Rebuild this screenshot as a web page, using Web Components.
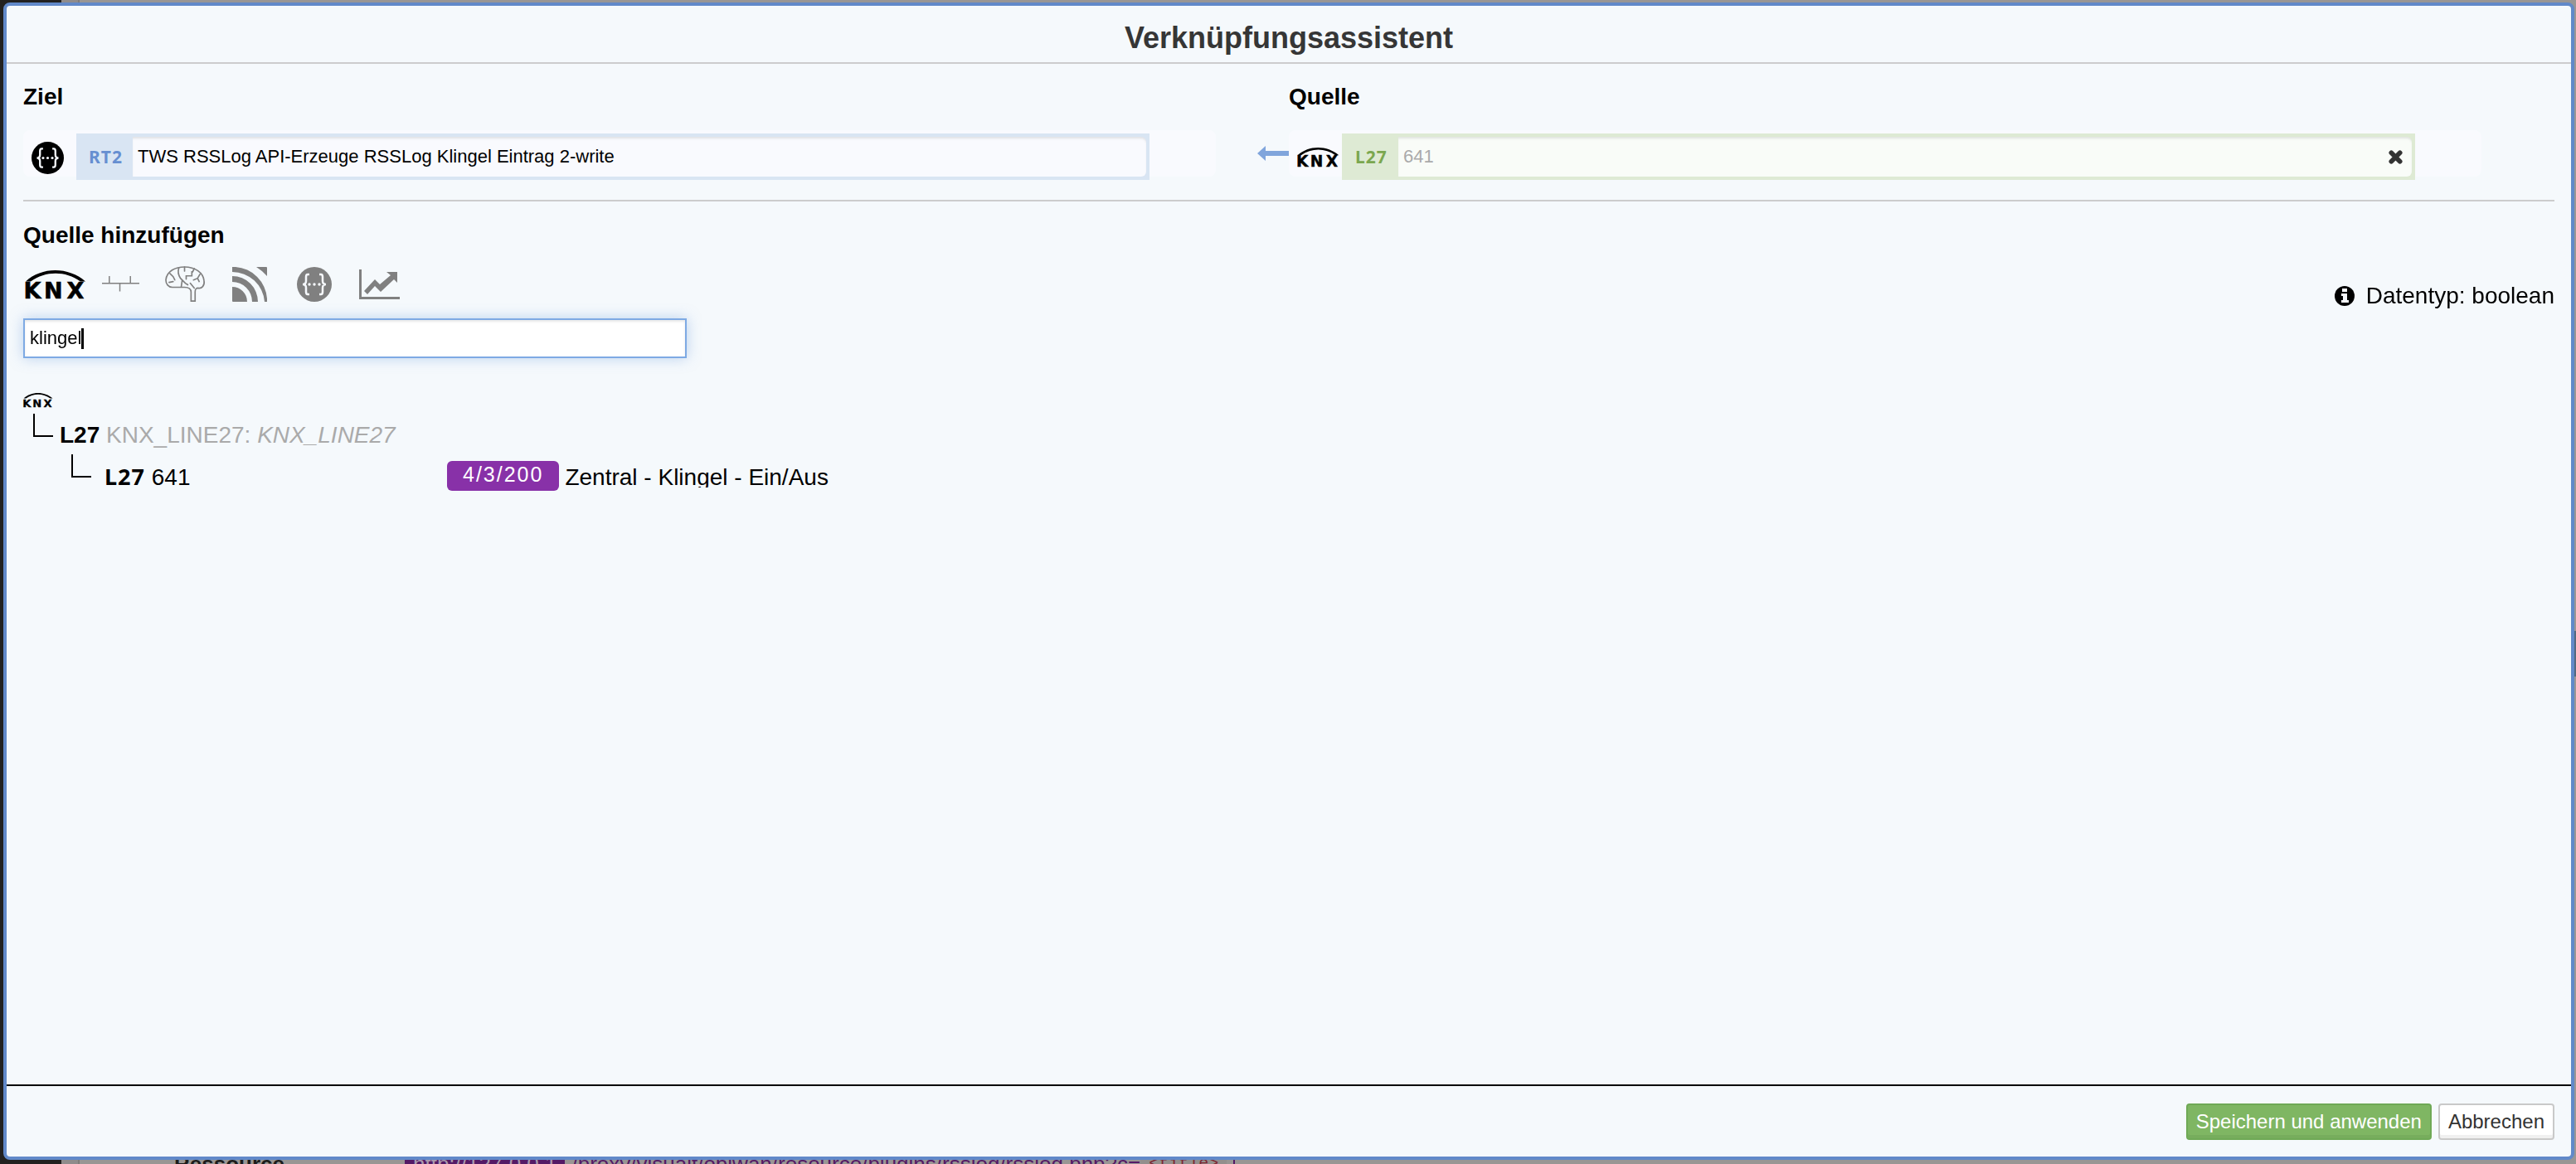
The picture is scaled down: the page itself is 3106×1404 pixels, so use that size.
<!DOCTYPE html>
<html lang="de">
<head>
<meta charset="utf-8">
<title>Verknüpfungsassistent</title>
<style>
html, body { height: 100%; margin: 0; overflow: hidden; }
body { font-family: "Liberation Sans", Arial, sans-serif; background: #999694; color: #000; }
</style>
</head>
<body>
<link-assistant-app></link-assistant-app>
<script>
const define = (name, html, setup) => {
  const template = document.createElement('template');
  template.innerHTML = html;
  customElements.define(name, class extends HTMLElement {
    constructor() {
      super();
      this.attachShadow({ mode: 'open' }).append(template.content.cloneNode(true));
    }
    connectedCallback() { if (setup) setup(this, this.shadowRoot); }
  });
};

const ICONS = {
  knx: `<svg viewBox="0 0 74 34"><path d="M1 13.500C20-4.500 53-4.500 73 13.500H67C49 .5 25 .5 7 13.500Z"/><text y="34" x="-1.500 23 50.500" style="font: bold 27px 'DejaVu Sans', sans-serif" stroke="currentColor" stroke-width=".6">KNX</text></svg>`,
  line: `<svg viewBox="0 0 46 20"><path d="M0 9H46M9 0V9M35 0V9M22 9V19" fill="none" stroke="currentColor" stroke-width="1.500"/></svg>`,
  brain: `<svg viewBox="0 0 50 44"><g fill="none" stroke="currentColor" stroke-width="1.700" stroke-linecap="round"><path d="M32 43V32C32 28 29 26 24 26H9C4 26 1 22 1 17C2 6 13 1 24 1C37 1 47 8 48 18C49 24 45 28 41 27C38 27 37 28 37 32V43Z"/><path d="M17 2C15 8 17 12 19 15L25 21L28 23M21 18L20 25M6 9L10 13L12 17M5 20L10 19M24 1V6M36 3L34 7H33V12H26V16M43 10L40 15L35 17M40 15L42 19M31 21L36 27"/></g></svg>`,
  rss: `<svg viewBox="0 0 42 42"><path d="M0 24A18 18 0 0 1 18 42H1Q0 42 0 41ZM0 11A31 31 0 0 1 31 42H24A24 24 0 0 0 0 18ZM0 0H4A41 41 0 0 1 42 38V42H39A39 39 0 0 0 0 6ZM29 0H41Q42 0 42 1V11Q37 5 29 0Z"/></svg>`,
  code: `<svg viewBox="0 0 42 42"><circle cx="21" cy="21" r="21"/><g fill="none" stroke="#f6f9fd" stroke-width="2.500"><path d="M15 9H13Q11 9 11 12V17Q11 21 7 21Q11 21 11 25V30Q11 33 13 33H15M27 9H29Q31 9 31 12V17Q31 21 35 21Q31 21 31 25V30Q31 33 29 33H27"/></g><g fill="#f6f9fd"><circle cx="15" cy="21" r="1.700"/><circle cx="21" cy="21" r="1.700"/><circle cx="27" cy="21" r="1.700"/></g></svg>`,
  chart: `<svg viewBox="0 0 49 37"><path d="M0 0H3V33H49V36H0ZM6 26L19 12L25 18L38 7L33 3H46V16L42 12L26 27L19 20L10 30Z"/></svg>`,
  arrow: `<svg viewBox="0 0 38 18"><path d="M0 9L10 0V6H38V12H10V18Z"/></svg>`,
  info: `<svg viewBox="0 0 24 24"><circle cx="12" cy="12" r="12"/><path fill="#f6f9fd" d="M9 3H15V7H9ZM8 9H15V17H17V20H8V17H10V12H8Z"/></svg>`,
  close: `<svg viewBox="0 0 18 18"><path d="M3.500 3.500L14.500 14.500M14.500 3.500L3.500 14.500" stroke="currentColor" stroke-width="6" stroke-linecap="round"/></svg>`,
};

define('ui-icon', `<style>
:host { display: block; flex: none; width: var(--w, 42px); }
svg { display: block; width: 100%; height: auto; fill: currentColor; overflow: visible; }
</style>`, (el, root) => {
  const holder = document.createElement('template');
  holder.innerHTML = ICONS[el.getAttribute('name')] || '';
  holder.content.firstElementChild.setAttribute('aria-hidden', 'true');
  root.append(holder.content);
});

define('page-backdrop', `<style>
:host { display: flex; height: 100vh; overflow: hidden; font-size: 26px; line-height: 30px; color: #1c1c1c; }
.side { width: 74px; background: #222120; }
.gutter { width: 20px; background: #8f8c8c; border-right: 2px solid #807d7b; }
.row { flex: 1; align-self: flex-end; height: 15px; display: flex; }
dt { flex: none; width: 278px; padding-left: 114px; font-weight: bold; }
dl { margin: 0; display: flex; }
dd { margin: 0; display: flex; color: #541a66; border-right: 2px solid #541a66; padding-right: 8px; }
.host { color: #a99aad; background: #541a66; padding: 0 10px; margin-right: 8px; }
code { color: #7d2733; background: #938f8d; font-family: "Liberation Mono", monospace; font-size: 20px; padding: 0 10px; }
.scroll { display: flex; flex-direction: column; justify-content: center; width: 2px; }
.thumb { height: 55px; margin-top: 173px; background: #51697f; }
</style>
<div class="side"></div><div class="gutter"></div>
<div class="row"><dl><dt>Ressource</dt><dd><span class="host">http://127.0.0.1</span><span>/proxy/visualt/obiwan/resource/plugins/rsslog/rsslog.php?c=</span><code>&lt;title&gt;</code></dd></dl></div>
<div class="scroll"><div class="thumb"></div></div>`);

define('modal-dialog', `<style>
:host { position: fixed; inset: 3px 2px 5px 4px; box-sizing: border-box; display: flex; flex-direction: column; border: 4px solid #6189c9; border-radius: 8px; background: #f5f9fc; }
header { height: 68px; border-bottom: 2px solid #cccccd; display: flex; align-items: center; justify-content: center; }
h1 { margin: 0; padding-top: 10px; font-size: 36px; line-height: 40px; color: #363636; }
main { flex: 1; padding: 24px 20px 0; }
footer { border-top: 2px solid #000; padding: 21px 20px 20px; display: flex; justify-content: flex-end; gap: 8px; }
</style>
<header><h1><slot name="title"></slot></h1></header>
<main><slot></slot></main>
<footer><slot name="actions"></slot></footer>`);

define('action-button', `<style>
:host { display: block; }
button { font: 24px/26px "Liberation Sans", Arial, sans-serif; height: 44px; padding: 0 10px; border: 2px solid #c9c9c9; border-radius: 4px; background: #fff; color: #333; box-shadow: inset 0 -4px #f0f0f0; }
:host([primary]) button { color: #fff; background: #7fb663; border-color: #6fa956; box-shadow: inset 0 -4px #77ad5d; }
</style><button type="button"><slot></slot></button>`);

define('link-field', `<style>
:host { display: flex; width: 1438px; height: 56px; margin-top: 24px; border-radius: 8px; background: #f9fafe; --tint: #d9e5f3; --ink: #668fd1; --paper: #f9fafe; }
:host([kind=source]) { --tint: #deead4; --ink: #7ba74f; --paper: #f9fcf8; }
.icon { width: 64px; display: flex; align-items: center; padding: 10px 0 0 10px; box-sizing: border-box; }
.box { flex: none; width: 1294px; height: 56px; margin-top: 4px; box-sizing: border-box; padding: 4px 4px 4px 0; display: flex; background: var(--tint); }
label { box-sizing: border-box; width: 68px; padding-left: 3px; line-height: 48px; text-align: center; font-family: "Noto Sans", sans-serif; font-weight: bold; font-size: 21px; letter-spacing: 1px; color: var(--ink); }
.entry { flex: 1; display: flex; align-items: center; padding-right: 11px; background: var(--paper); border-radius: 0 6px 6px 0; box-shadow: inset 0 3px 3px -1px #0000001a; }
input { flex: 1; min-width: 0; height: 48px; box-sizing: border-box; padding: 0 6px 1px; border: 0; outline: 0; background: none; font: 22px/26px "Liberation Sans", Arial, sans-serif; color: #000; }
:host([kind=source]) input { color: #aaa; }
button { display: flex; padding: 0; border: 0; background: none; color: #333; --w: 17px; }
button[hidden] { display: none; }
</style>
<div class="icon"><slot name="icon"></slot></div>
<div class="box"><label for="v"></label><div class="entry"><input id="v" type="text"><button type="button" aria-label="Entfernen"><ui-icon name="close"></ui-icon></button></div></div>`, (el, root) => {
  root.querySelector('label').textContent = el.getAttribute('tag');
  root.querySelector('input').value = el.getAttribute('value');
  root.querySelector('button').hidden = el.getAttribute('kind') !== 'source';
});

define('link-pair', `<style>
:host { display: grid; grid-template-columns: 1fr 1fr; height: 142px; border-bottom: 2px solid #cccccd; box-sizing: border-box; }
h2 { margin: 0; font-size: 28px; line-height: 32px; }
.with-arrow { display: flex; position: relative; }
.arrow { position: absolute; left: -38px; top: 43px; --w: 38px; color: #80a5dc; }
.code { --w: 39px; } .knx { --w: 51px; }
</style>
<section><h2>Ziel</h2><link-field tag="RT2" value="TWS RSSLog API-Erzeuge RSSLog Klingel Eintrag 2-write"><ui-icon class="code" slot="icon" name="code"></ui-icon></link-field></section>
<section><h2>Quelle</h2><div class="with-arrow"><ui-icon class="arrow" name="arrow"></ui-icon><link-field kind="source" tag="L27" value="641"><ui-icon class="knx" slot="icon" name="knx"></ui-icon></link-field></div></section>`);

define('source-picker', `<style>
:host { display: block; padding-top: 25px; }
h2 { margin: 0; font-size: 28px; line-height: 32px; }
.bar { display: flex; justify-content: space-between; height: 84px; }
nav { display: flex; align-items: center; padding: 2px 0 0 2px; gap: 4px; }
nav button { display: flex; justify-content: center; width: 74px; padding: 0; border: 0; background: none; color: #808080; }
nav button.on { color: #000; --w: 74px; }
.line { --w: 45px; } .brain { --w: 49px; } .chart { --w: 49px; }
.type { display: flex; align-items: center; gap: 14px; font-size: 28px; line-height: 32px; padding-top: 30px; --w: 24px; }
.search { display: grid; justify-content: start; align-items: center; }
.search > * { grid-area: 1 / 1; }
input { box-sizing: border-box; width: 800px; height: 48px; padding: 0 6px; border: 2px solid #7eaae4; outline: 0; background: #fff; font: 22px/26px "Liberation Sans", Arial, sans-serif; box-shadow: 0 0 16px #7eaae480, inset 0 2px 3px #00000018; }
.caret { z-index: 1; width: 3px; height: 25px; margin-left: 70px; background: #000; pointer-events: none; }
</style>
<h2>Quelle hinzufügen</h2>
<div class="bar"><nav>
<button class="on" type="button" aria-label="KNX"><ui-icon name="knx"></ui-icon></button>
<button type="button" aria-label="Linie"><ui-icon class="line" name="line"></ui-icon></button>
<button type="button" aria-label="Logik"><ui-icon name="brain" class="brain"></ui-icon></button>
<button type="button" aria-label="RSS"><ui-icon name="rss"></ui-icon></button>
<button type="button" aria-label="API"><ui-icon name="code"></ui-icon></button>
<button type="button" aria-label="Diagramm"><ui-icon class="chart" name="chart"></ui-icon></button>
</nav><div class="type"><ui-icon name="info"></ui-icon><span>Datentyp: boolean</span></div></div>
<div class="search"><input type="text" value="klingel" aria-label="Suche"><span class="caret"></span></div>`);

define('result-tree', `<style>
:host { display: block; padding-top: 42px; font-size: 28px; line-height: 32px; }
ul { list-style: none; margin: 0; padding: 0; }
.root { --w: 36px; height: 25px; }
.node { display: flex; }
.elbow { flex: none; width: 22px; height: 26px; border: solid #000; border-width: 0 0 2px 2px; }
.l1 { padding-left: 12px; height: 49px; } .l2 { padding-left: 58px; }
.l1 p { padding: 10px 0 0 8px; } .l2 p { padding: 11px 0 0 16px; width: 429px; box-sizing: border-box; }
p { margin: 0; white-space: nowrap; } .muted { color: #aaa; }
.badge { flex: none; height: 36px; line-height: 33px; margin-top: 8px; padding: 0 19px; border-radius: 6px; background: #8831a8; color: #fff; font-size: 25px; letter-spacing: 2px; box-sizing: border-box; }
.name { margin: 12px 0 0 7px; height: 28px; overflow: hidden; }
.code { font-family: "Noto Sans", sans-serif; font-size: 27px; letter-spacing: 1px; }
</style>
<div class="root"><ui-icon name="knx"></ui-icon></div>
<ul><li><div class="node l1"><span class="elbow"></span><p><b>L27</b> <span class="muted">KNX_LINE27: <i>KNX_LINE27</i></span></p></div>
<ul><li><div class="node l2"><span class="elbow"></span><p><b class="code">L27</b> 641</p><span class="badge">4/3/200</span><span class="name">Zentral - Klingel - Ein/Aus</span></div></li></ul></li></ul>`);

define('link-assistant-app', `<style>:host { display: block; height: 100%; }</style>
<page-backdrop></page-backdrop>
<modal-dialog>
<span slot="title">Verknüpfungsassistent</span>
<link-pair></link-pair>
<source-picker></source-picker>
<result-tree></result-tree>
<action-button slot="actions" primary>Speichern und anwenden</action-button>
<action-button slot="actions">Abbrechen</action-button>
</modal-dialog>`);
</script>
</body>
</html>
